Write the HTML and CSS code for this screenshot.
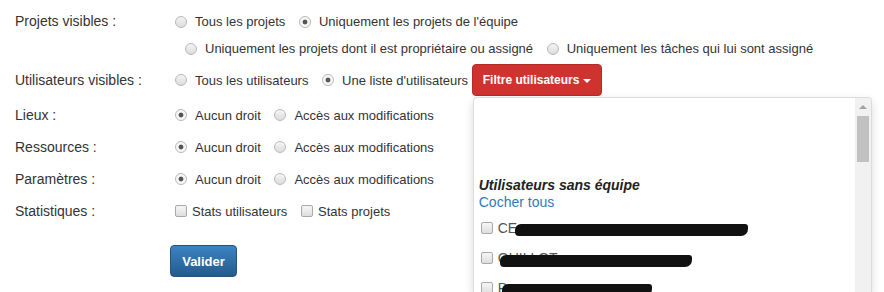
FILE: index.html
```html
<!DOCTYPE html>
<html lang="fr">

<head>
    <meta charset="UTF-8">
    <meta name="viewport" content="width=device-width, initial-scale=1.0">
    <title>Droits utilisateur</title>
    <link rel="stylesheet" href="styles.css">
</head>

<body>
    <form class="rights-form">
        <div class="row row-projects">
            <div class="row-label">Projets visibles :</div>
            <div class="opts">
                <label class="opt"><input type="radio" name="projets">Tous les projets</label>
                <label class="opt"><input type="radio" name="projets" checked>Uniquement les projets de l'équipe</label>
                <label class="opt"><input type="radio" name="projets">Uniquement les projets dont il est propriétaire ou assigné</label>
                <label class="opt"><input type="radio" name="projets">Uniquement les tâches qui lui sont assigné</label>
            </div>
        </div>

        <div class="row row-users">
            <div class="row-label">Utilisateurs visibles :</div>
            <div class="opts">
                <label class="opt"><input type="radio" name="users">Tous les utilisateurs</label>
                <label class="opt"><input type="radio" name="users" checked>Une liste d'utilisateurs</label>
                <div class="dropdown">
                    <button type="button" class="btn btn-danger">Filtre utilisateurs <span class="caret"></span></button>
                    <div class="dropdown-menu">
                        <div class="menu-content">
                            <div class="group-title">Utilisateurs sans équipe</div>
                            <a class="check-all" href="#">Cocher tous</a>
                            <label class="user"><input type="checkbox"><span class="name">CE</span><span class="blot blot-1"></span></label>
                            <label class="user"><input type="checkbox"><span class="name">GUILLOT</span><span class="blot blot-2"></span></label>
                            <label class="user"><input type="checkbox"><span class="name">P</span><span class="blot blot-3"></span></label>
                        </div>
                        <div class="scrollbar">
                            <span class="scroll-arrow"></span>
                            <span class="scroll-thumb"></span>
                        </div>
                    </div>
                </div>
            </div>
        </div>

        <div class="row row-first">
            <div class="row-label">Lieux :</div>
            <div class="opts">
                <label class="opt"><input type="radio" name="lieux" checked>Aucun droit</label>
                <label class="opt"><input type="radio" name="lieux">Accès aux modifications</label>
            </div>
        </div>

        <div class="row">
            <div class="row-label">Ressources :</div>
            <div class="opts">
                <label class="opt"><input type="radio" name="ressources" checked>Aucun droit</label>
                <label class="opt"><input type="radio" name="ressources">Accès aux modifications</label>
            </div>
        </div>

        <div class="row">
            <div class="row-label">Paramètres :</div>
            <div class="opts">
                <label class="opt"><input type="radio" name="parametres" checked>Aucun droit</label>
                <label class="opt"><input type="radio" name="parametres">Accès aux modifications</label>
            </div>
        </div>

        <div class="row">
            <div class="row-label">Statistiques :</div>
            <div class="opts">
                <label class="opt"><input type="checkbox">Stats utilisateurs</label>
                <label class="opt"><input type="checkbox">Stats projets</label>
            </div>
        </div>

        <div class="actions">
            <button type="submit" class="btn btn-primary">Valider</button>
        </div>
    </form>
</body>

</html>
```

FILE: styles.css
```css
body {
  font-family: 'Liberation Sans', Arial, sans-serif;
  font-size: 14px;
  color: #333;
  background-color: #fff;
  margin: 0;
  height: 292px;
  overflow: hidden;
}
.rights-form {
  padding: 8px 0 0 15px;
}
.row {
  display: flex;
  align-items: center;
  height: 32px;
}
.row-label {
  width: 160px;
  flex: none;
}
.row-projects {
  align-items: flex-start;
  height: 54px;
}
.row-projects .row-label {
  line-height: 27px;
}
.row-users {
  margin-top: 2px;
}
.row-first {
  margin-top: 3px;
}
.opts {
  font-size: 13px;
  width: 660px;
}
.opt {
  display: inline-flex;
  align-items: center;
  height: 27px;
  vertical-align: middle;
}
.opt + .opt {
  margin-left: 10px;
}
input[type="radio"] {
  -webkit-appearance: none;
  appearance: none;
  width: 12px;
  height: 12px;
  margin: 0 8px 0 0;
  border: 1px solid #b9b9b9;
  border-radius: 50%;
  background: linear-gradient(#f4f4f4, #dcdcdc);
  box-sizing: border-box;
}
input[type="radio"]:checked {
  background: radial-gradient(circle, #555 0, #555 2px, #f6f6f6 2.8px);
}
input[type="checkbox"] {
  -webkit-appearance: none;
  appearance: none;
  width: 12px;
  height: 12px;
  margin: 0 5px 0 0;
  border: 1px solid #a9a9a9;
  border-radius: 2px;
  background: linear-gradient(#f6f6f6, #dedede);
  box-sizing: border-box;
}
.dropdown {
  display: inline-block;
  position: relative;
  vertical-align: middle;
}
.btn {
  font-family: 'Liberation Sans', Arial, sans-serif;
  color: #fff;
  border-radius: 4px;
  height: 32px;
  cursor: pointer;
}
.btn-danger {
  font-size: 12px;
  font-weight: bold;
  padding: 0 10px;
  background-color: #cf3330;
  border: 1px solid #b52b27;
}
.caret {
  display: inline-block;
  width: 0;
  height: 0;
  vertical-align: middle;
  border-top: 4px solid #fff;
  border-left: 4px solid transparent;
  border-right: 4px solid transparent;
}
.dropdown-menu {
  position: absolute;
  top: 100%;
  left: 1px;
  margin-top: 1px;
  width: 399px;
  height: 196px;
  overflow: hidden;
  display: flex;
  background-color: #fff;
  border: 1px solid #dcdcdc;
  border-bottom: none;
  border-radius: 4px 4px 0 0;
  box-shadow: 0 4px 10px rgba(0, 0, 0, 0.15);
  box-sizing: border-box;
  font-size: 14px;
}
.menu-content {
  flex: 1;
  padding: 79px 0 0 5px;
}
.group-title {
  font-weight: bold;
  font-style: italic;
  color: #222;
  line-height: 17px;
}
.check-all {
  display: block;
  color: #337ab7;
  text-decoration: none;
  line-height: 17px;
}
.user {
  display: flex;
  align-items: center;
  height: 30px;
  padding-left: 2px;
  color: #555;
}
.user:first-of-type {
  margin-top: 2px;
}
.blot {
  display: inline-block;
  height: 12px;
  background-color: #111;
  border-radius: 6px 3px 7px 4px;
  margin-top: 3px;
}
.blot-1 {
  width: 233px;
  margin-left: -2px;
}
.blot-2 {
  width: 192px;
  margin-left: -58px;
  margin-top: 5px;
}
.blot-3 {
  width: 150px;
  margin-left: -5px;
}
.scrollbar {
  width: 16px;
  flex: none;
  background-color: #f1f1f1;
  display: flex;
  flex-direction: column;
  align-items: center;
}
.scroll-arrow {
  margin-top: 7px;
  width: 0;
  height: 0;
  border-bottom: 4px solid #a3a3a3;
  border-left: 4px solid transparent;
  border-right: 4px solid transparent;
}
.scroll-thumb {
  margin-top: 7px;
  width: 12px;
  height: 46px;
  background-color: #c1c1c1;
}
.actions {
  margin: 18px 0 0 155px;
}
.btn-primary {
  font-size: 13px;
  font-weight: bold;
  width: 67px;
  padding: 0;
  background-image: linear-gradient(#3a83c2, #245b8c);
  border: 1px solid #245580;
}
```
